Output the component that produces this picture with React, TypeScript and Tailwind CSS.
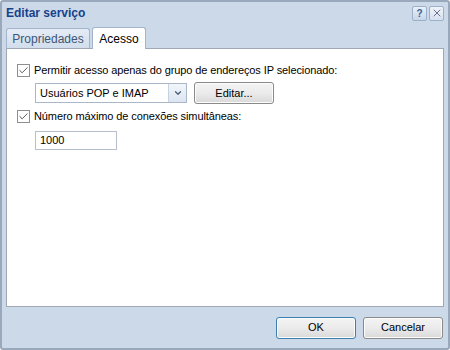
import { Check, ChevronDown, X } from "lucide-react";

function WinButton({ label, primary }: { label: string; primary?: boolean }) {
  return (
    <button
      type="button"
      className={
        "flex h-[22px] w-[80px] items-center justify-center rounded-[3px] border bg-gradient-to-b from-[#f4f4f4] via-[#ebebeb] to-[#d9d9d9] text-[11px] text-black shadow-[inset_0_0_0_1px_#fcfcfc] " +
        (primary ? "border-[#3c7fb1]" : "border-[#8a8a8a]")
      }
    >
      {label}
    </button>
  );
}

function CheckRow({ label }: { label: string }) {
  return (
    <label className="flex items-center gap-[4px]">
      <span className="flex h-[13px] w-[13px] items-center justify-center border border-[#8f8f8f] bg-white">
        <Check className="h-[11px] w-[11px] text-[#4a4a4a]" strokeWidth={2} />
      </span>
      <span className="text-[11px] leading-[14px] tracking-[-0.1px] text-black">{label}</span>
    </label>
  );
}

export default function App() {
  return (
    <div
      className="flex h-[350px] w-[450px] flex-col rounded-[3px] border-2 border-[#9aa8bb] bg-[#ccd9e8] px-[4px]"
      style={{ fontFamily: '"Liberation Sans", Arial, sans-serif' }}
    >
      {/* title bar */}
      <div className="flex h-[22px] items-center justify-between">
        <span className="text-[12px] font-bold text-[#15428b]">Editar serviço</span>
        <div className="flex gap-[2px]">
          <span className="flex h-[15px] w-[15px] items-center justify-center rounded-[2px] border border-[#9db0c8] bg-gradient-to-b from-[#e8f0fa] to-[#c6d6ea] text-[10px] font-bold text-[#3a5f8f]">
            ?
          </span>
          <span className="flex h-[15px] w-[15px] items-center justify-center rounded-[2px] border border-[#9db0c8] bg-gradient-to-b from-[#f0f4fa] to-[#d6e0ee]">
            <X className="h-[12px] w-[12px] text-[#3b4b63]" strokeWidth={1.5} />
          </span>
        </div>
      </div>

      {/* tabs */}
      <div className="mt-[3px] flex items-end gap-[2px]">
        <div className="flex h-[20px] w-[84px] items-center justify-center rounded-t-[3px] border border-b-0 border-[#a3b4cc] bg-gradient-to-b from-[#e4ecf6] to-[#d2deec] text-[12px] text-[#3f5676]">
          Propriedades
        </div>
        <div className="relative -mb-px flex h-[22px] w-[54px] items-center justify-center rounded-t-[3px] border border-b-0 border-[#a3b4cc] bg-white text-[12px] text-black">
          Acesso
        </div>
      </div>

      {/* panel */}
      <div className="flex h-[259px] flex-col border border-[#a0a8b6] bg-white px-[10px] pt-[14px]">
        <CheckRow label="Permitir acesso apenas do grupo de endereços IP selecionado:" />
        <div className="mt-[5px] flex items-center gap-[7px] pl-[18px]">
          <div className="flex h-[20px] w-[152px] border border-[#a9b7c9]">
            <div className="flex flex-1 items-center bg-white pl-[4px] text-[11px] text-black">
              Usuários POP e IMAP
            </div>
            <div className="flex w-[18px] items-center justify-center border-l border-[#c5d2e2] bg-gradient-to-b from-[#f2f6fb] to-[#dbe5f1]">
              <ChevronDown className="h-[10px] w-[10px] text-[#4b5d78]" strokeWidth={3} />
            </div>
          </div>
          <WinButton label="Editar..." />
        </div>
        <div className="mt-[5px]">
          <CheckRow label="Número máximo de conexões simultâneas:" />
        </div>
        <div className="mt-[8px] pl-[18px]">
          <div className="flex h-[19px] w-[82px] items-center border border-[#b5bfcb] bg-white pl-[4px] text-[11px] text-black">
            1000
          </div>
        </div>
      </div>

      {/* footer */}
      <div className="flex flex-1 items-center justify-end gap-[7px] pr-[1px]">
        <WinButton label="OK" primary />
        <WinButton label="Cancelar" />
      </div>
    </div>
  );
}
